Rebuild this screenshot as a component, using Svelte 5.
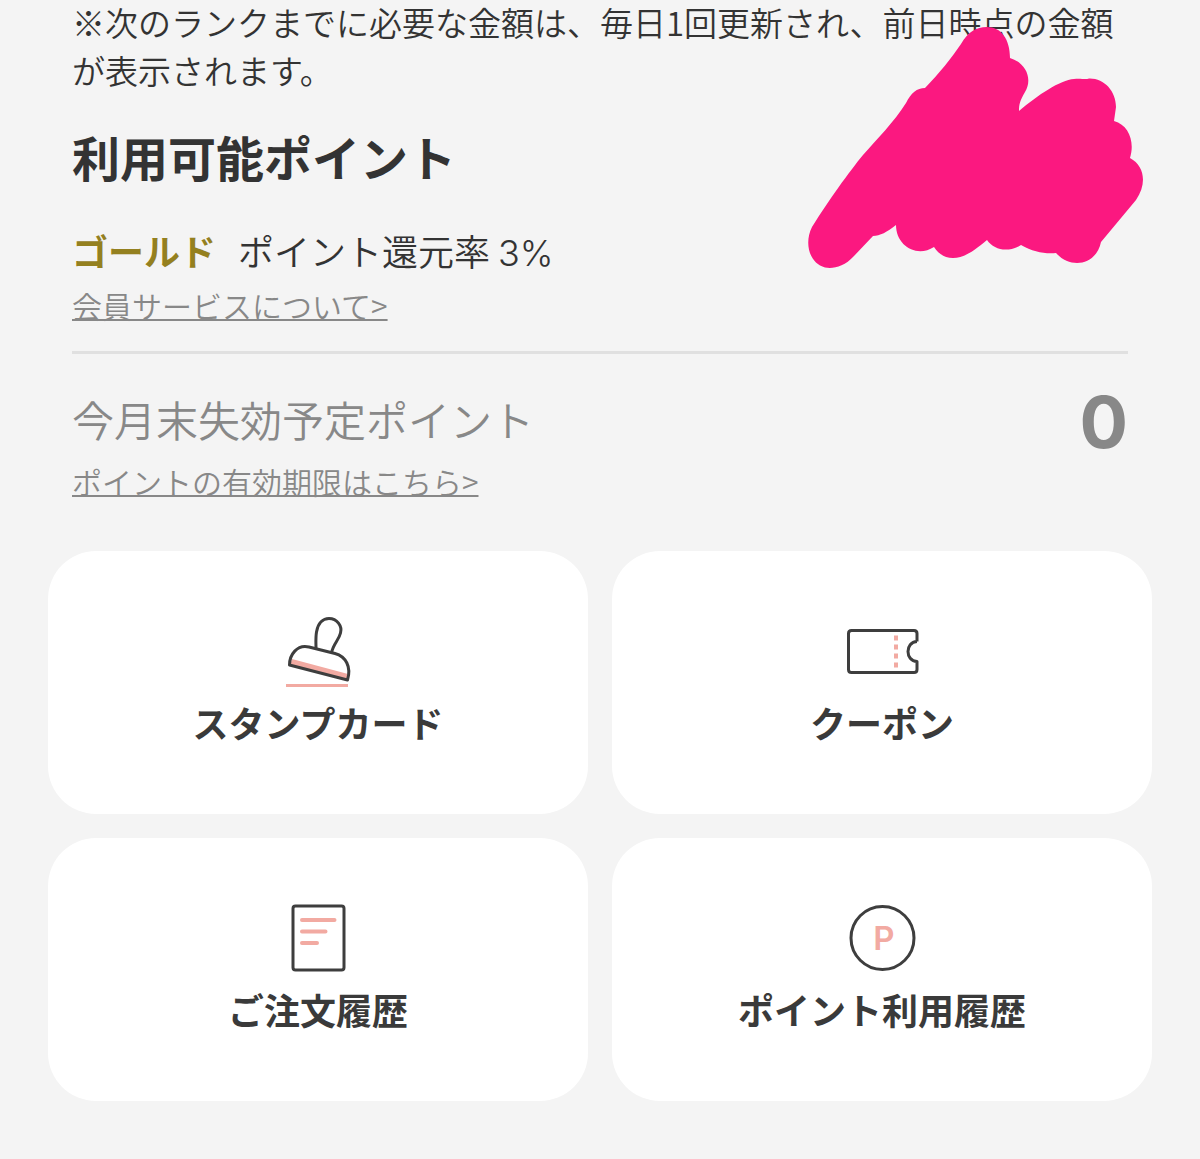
<script>
    const rank = {
        name: 'ゴールド',
        rate: 3
    };

    const expiringPoints = 0;

    const menu = [
        { id: 'stamp', label: 'スタンプカード' },
        { id: 'coupon', label: 'クーポン' },
        { id: 'orders', label: 'ご注文履歴' },
        { id: 'points', label: 'ポイント利用履歴' }
    ];
</script>

<main class="page">
    <section class="points">
        <p class="note">※次のランクまでに必要な金額は、毎日1回更新され、前日時点の金額が表示されます。</p>

        <h1 class="title">利用可能ポイント</h1>

        <div class="available">
            <p class="rank">
                <strong class="rank-name">{rank.name}</strong>
                <span>ポイント還元率 <span class="rate">{rank.rate}%</span></span>
            </p>
            <a href="#service" class="link">会員サービスについて&gt;</a>
        </div>

        <div class="expiring">
            <div>
                <h2 class="expiring-title">今月末失効予定ポイント</h2>
                <a href="#expiry" class="link">ポイントの有効期限はこちら&gt;</a>
            </div>
            <span class="expiring-value">{expiringPoints}</span>
        </div>
    </section>

    <nav class="menu">
        {#each menu as item}
            <a href="#{item.id}" class="card">
                <svg class="icon" viewBox="0 0 72 72" aria-hidden="true">
                    {#if item.id === 'stamp'}
                        <path class="fill" d="M10 44 L66 59 L65 65 L8 50 Z" />
                        <path class="line" d="M34 34 C34 28 33.5 23 34.5 17 C36 8 41 3.500 47 3.500 C55 3.500 60.500 11 58.500 18 C57 25 51 29 49.500 38" />
                        <path class="line" d="M7.500 50 C7.500 40 15 29 27 32 L53 38.500 C64 41.500 69.500 52 65.500 65 Z" />
                        <path class="accent" d="M4 70.500 H66" />
                    {:else if item.id === 'coupon'}
                        <path class="line" d="M71 26.500 V18.500 Q71 15.500 68 15.500 H5.500 Q2.500 15.500 2.500 18.500 V54.500 Q2.500 57.500 5.500 57.500 H68 Q71 57.500 71 54.500 V46.500 C59 46 59 27 71 26.500" />
                        <path class="dash" d="M50 20.500 V53" />
                    {:else if item.id === 'orders'}
                        <rect class="line" x="11" y="4" width="51" height="64" rx="2.500" />
                        <path class="bars" d="M20 18 H52.500 M20 29.500 H43.500 M20 41 H35" />
                    {:else}
                        <circle class="line" cx="36.500" cy="36" r="31.500" />
                        <text class="letter" x="38" y="48" text-anchor="middle">P</text>
                    {/if}
                </svg>
                <span class="label">{item.label}</span>
            </a>
        {/each}
    </nav>

    <svg class="scribble" viewBox="0 0 336 242" aria-hidden="true">
        <path d="M117 61 C131 47 144 30 153 17 C160 5 168 0 179 0 C193 0 202 12 202 31 C218 36 225 52 217 65 C212 74 211 77 211 84 C230 68 252 53 266 52 C273 51 277 53 281 51.500 C296 51 308 64 308 80 L306 94 C321 98 327 115 322 131 C337 139 339 157 328 173 L293 215 C288 239 262 242 248 226 C237 227 225 225 213 218 C200 226 186 223 179 213 C166 224 156 231 145 231 C136 231 130 226 126 220 C109 231 88 219 88 198 C79 205 72 209 65 209 L46 229 C36 240 25 242 17 240.500 C1 236 -4 216 4 200 C21 173 41 145 55 128 C69 112 86 95 98 76 C103 66 109 61 117 61 Z" />
    </svg>
</main>

<style>
    :global(body) {
        margin: 0;
        background: #f4f4f4;
    }

    .page {
        position: relative;
        padding: 0 48px 57px;
        color: #333;
        font-family: 'Noto Sans CJK JP', sans-serif;
        font-weight: 350;
    }

    .points {
        margin-top: -2px;
        padding: 0 24px;
    }

    /* Rank note and title */
    .note {
        margin: 0;
        font-size: 33px;
        line-height: 48px;
    }

    .title {
        margin: 26px 0 31px;
        font-size: 48px;
        font-weight: 700;
        line-height: 72px;
    }

    .available {
        padding-bottom: 23px;
        border-bottom: 3px solid #e0e0e0;
    }

    .rank {
        display: flex;
        gap: 22px;
        margin: 0 0 6px;
        font-size: 36px;
        line-height: 54px;
    }

    .rank-name {
        color: #94801f;
        font-weight: 700;
    }

    .rate {
        font-family: Inter, sans-serif;
        font-weight: 300;
        line-height: 1;
    }

    .link {
        display: block;
        width: fit-content;
        color: #888;
        font-size: 30px;
        line-height: 45px;
        text-decoration: underline;
        text-decoration-thickness: 2px;
        text-decoration-skip-ink: none;
    }

    /* Expiring points */
    .expiring {
        display: flex;
        justify-content: space-between;
        align-items: flex-start;
        padding: 38px 0 47px;
        color: #888;
    }

    .expiring-title {
        margin: 0 0 13px;
        font-size: 42px;
        font-weight: 350;
        line-height: 54px;
    }

    .expiring-value {
        font-family: Inter, sans-serif;
        font-size: 72px;
        font-weight: 700;
        line-height: 60px;
    }

    /* Menu cards */
    .menu {
        display: grid;
        grid-template-columns: 1fr 1fr;
        gap: 24px;
    }

    .card {
        display: flex;
        flex-direction: column;
        align-items: center;
        gap: 8px;
        padding: 64px 24px;
        background: #fff;
        border-radius: 48px;
        color: #3a3a3a;
        text-decoration: none;
    }

    .label {
        font-size: 36px;
        font-weight: 700;
        line-height: 55px;
    }

    .icon {
        width: 72px;
        height: 72px;
        overflow: visible;
        fill: none;
    }

    .line {
        stroke: #3e3e3e;
        stroke-width: 3;
        stroke-linejoin: round;
    }

    .fill {
        fill: #f2aaa2;
    }

    .accent {
        stroke: #f2aaa2;
        stroke-width: 3;
    }

    .dash {
        stroke: #f2aaa2;
        stroke-width: 4;
        stroke-dasharray: 5 4;
    }

    .bars {
        stroke: #f2aaa2;
        stroke-width: 4;
        stroke-linecap: round;
    }

    .letter {
        fill: #f2aaa2;
        font-family: Inter, sans-serif;
        font-size: 33px;
        font-weight: 600;
    }

    .scribble {
        position: absolute;
        top: 29px;
        right: 56px;
        width: 336px;
        height: 242px;
        overflow: visible;
        fill: #fb1880;
    }
</style>
